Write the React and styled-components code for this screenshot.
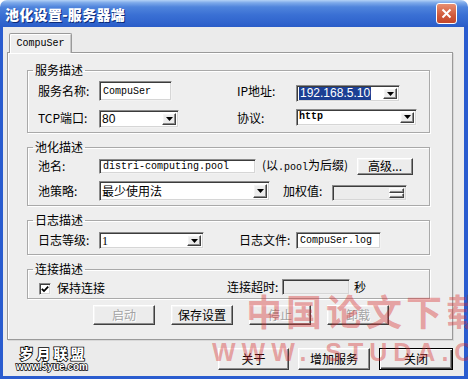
import React from 'react';
import styled, { createGlobalStyle, css } from 'styled-components';

const GlobalStyle = createGlobalStyle`
  html, body {
    margin: 0;
    padding: 0;
    background: #ffffff;
  }
  body {
    font-family: "Noto Sans CJK SC", "Liberation Sans", sans-serif;
    font-size: 12px;
    color: #000;
  }
  * {
    box-sizing: border-box;
  }
`;

const sunken = css`
  border: 1px solid;
  border-color: #8a8a8a #f2f2f2 #f2f2f2 #8a8a8a;
  box-shadow: inset 1px 1px 0 #3c3c3c, inset -1px -1px 0 #d6d6d6;
`;

const raised = css`
  border: 1px solid;
  border-color: #ffffff #404040 #404040 #ffffff;
  box-shadow: inset -1px -1px 0 #8c8c8c, inset 1px 1px 0 #f4f4f4;
`;

const Window = styled.div`
  position: relative;
  width: 468px;
  height: 379px;
  display: flex;
  flex-direction: column;
  overflow: hidden;
`;

const TitleBar = styled.div`
  flex: none;
  height: 27px;
  display: flex;
  align-items: center;
  justify-content: space-between;
  padding: 0 11px 0 5px;
  border-radius: 7px 7px 0 0;
  background: linear-gradient(
    to bottom,
    #b4d2f6 0%,
    #7eaaea 10%,
    #4f84dc 26%,
    #3a70d4 55%,
    #3064cd 85%,
    #2a5cc8 100%
  );
`;

const Title = styled.span`
  color: #ffffff;
  font-size: 14px;
  font-weight: 900;
  letter-spacing: 0.3px;
  text-shadow: 1px 1px 0 #0c2b78;
`;

const CloseButton = styled.div`
  width: 21px;
  height: 21px;
  border: 1px solid #ffffff;
  border-radius: 3px;
  background: linear-gradient(to bottom, #e88f72, #d0593a 60%, #c4472b);
  display: flex;
  align-items: center;
  justify-content: center;
`;

const Frame = styled.div`
  flex: 1;
  display: flex;
  flex-direction: column;
  background: #ebebeb;
  border: solid #2a5ccf;
  border-width: 0 4px 3px 3px;
  padding: 6px 11px 0 4px;
`;

const TabStrip = styled.div`
  display: flex;
  height: 19px;
  padding-left: 2px;
`;

const Tab = styled.div`
  width: 63px;
  height: 20px;
  margin-bottom: -1px;
  position: relative;
  z-index: 1;
  display: flex;
  align-items: center;
  justify-content: center;
  background: #eeeeee;
  border: 1px solid #9a9a9a;
  border-bottom: none;
  border-radius: 2px 2px 0 0;
  box-shadow: inset 1px 1px 0 #ffffff, inset -1px 0 0 #c8c8c8;
  font-family: "Liberation Mono", monospace;
  font-size: 10px;
`;

const TabPage = styled.div`
  flex: none;
  height: 288px;
  display: flex;
  flex-direction: column;
  background: #eeeeee;
  border: 1px solid #9a9a9a;
  box-shadow: inset 1px 1px 0 #ffffff, 1px 1px 0 #d8d8d8;
  padding: 10px 22px 0 19px;
`;

const Group = styled.fieldset`
  margin: 0;
  padding: ${({ $pt }) => $pt ?? 4}px 0 ${({ $pb }) => $pb ?? 4}px 10px;
  border: 1px solid #a9a9a9;
  box-shadow: inset 1px 1px 0 #ffffff, 1px 1px 0 #ffffff;
  min-width: 0;

  & + & {
    margin-top: 7px;
  }
`;

const Legend = styled.legend`
  margin-left: -5px;
  padding: 0 2px;
  line-height: 14px;
  font-size: 12px;
`;

const Row = styled.div`
  display: flex;
  align-items: center;
  height: ${({ $h }) => $h ?? 20}px;

  & + & {
    margin-top: 7px;
  }
`;

const Label = styled.span`
  flex: none;
  width: ${({ $w }) => ($w ? `${$w}px` : 'auto')};
  margin-left: ${({ $ml }) => $ml ?? 0}px;
  white-space: nowrap;
  line-height: 14px;
`;

const Slot = styled.div`
  flex: none;
  width: ${({ $w }) => $w}px;
  display: flex;
  align-items: center;
`;

const TextBox = styled.div`
  ${sunken}
  flex: none;
  width: ${({ $w }) => $w}px;
  height: ${({ $h }) => $h}px;
  margin-top: ${({ $mt }) => $mt ?? 0}px;
  padding: 0 3px;
  display: flex;
  align-items: center;
  background: ${({ $disabled }) => ($disabled ? '#ececec' : '#ffffff')};
  font-family: "Liberation Mono", monospace;
  font-size: 10px;
  line-height: 11px;
  white-space: nowrap;
`;

const ComboBox = styled.div`
  ${sunken}
  flex: none;
  width: ${({ $w }) => $w}px;
  height: ${({ $h }) => $h}px;
  margin-top: ${({ $mt }) => $mt ?? 0}px;
  padding: 2px;
  display: flex;
  align-items: center;
  background: #ffffff;
`;

const fonts = {
  sans: '"Liberation Sans", sans-serif',
  mono: '"Liberation Mono", monospace',
  serif: '"Liberation Serif", serif',
  cjk: '"Noto Sans CJK SC", sans-serif',
};

const ComboValue = styled.span`
  flex: 1;
  display: flex;
  align-items: center;
  height: 100%;
  min-width: 0;
  white-space: nowrap;
  font-family: ${({ $font }) => fonts[$font]};
  font-size: ${({ $size }) => $size}px;
  font-weight: ${({ $bold }) => ($bold ? 700 : 400)};
  line-height: 12px;
`;

const Highlight = styled.span`
  background: #1c3f94;
  color: #ffffff;
  padding: 0 1px;
  line-height: 13px;
`;

const DropButton = styled.span`
  ${raised}
  flex: none;
  width: ${({ $w }) => $w ?? 14}px;
  height: 100%;
  display: flex;
  align-items: center;
  justify-content: center;
  background: #ececec;
`;

const Hint = styled.span`
  flex: none;
  margin-left: 6px;
  width: 95px;
  white-space: nowrap;
  line-height: 14px;
`;

const HintMono = styled.span`
  font-family: "Liberation Mono", monospace;
  font-size: 10px;
`;

const SmallButton = styled.div`
  ${raised}
  flex: none;
  width: ${({ $w }) => $w}px;
  height: ${({ $h }) => $h}px;
  display: flex;
  align-items: center;
  justify-content: center;
  background: #ececec;
  white-space: nowrap;
  line-height: 14px;
`;

const SpinBox = styled.div`
  ${sunken}
  flex: none;
  width: 75px;
  height: 16px;
  margin-top: 3px;
  padding: 2px;
  display: flex;
  justify-content: flex-end;
  background: #ececec;
`;

const SpinButtons = styled.div`
  width: 15px;
  display: flex;
  flex-direction: column;
`;

const SpinHalf = styled.span`
  ${raised}
  flex: 1;
  background: #ececec;
`;

const CheckBox = styled.span`
  ${sunken}
  flex: none;
  width: 12px;
  height: 12px;
  margin-left: 1px;
  margin-top: 3px;
  background: #ffffff;
  display: flex;
  align-items: center;
  justify-content: center;
`;

const CheckLabel = styled.span`
  margin-left: 6px;
  margin-top: 2px;
  white-space: nowrap;
  line-height: 14px;
`;

const Unit = styled.span`
  margin-left: 4px;
  line-height: 14px;
`;

const ActionRow = styled.div`
  display: flex;
  gap: 16px;
  margin-top: 6px;
  padding-left: 66px;
`;

const Button = styled.div`
  ${raised}
  flex: none;
  width: ${({ $w }) => $w}px;
  height: ${({ $h }) => $h}px;
  display: flex;
  align-items: center;
  justify-content: center;
  background: #ececec;
  white-space: nowrap;
  line-height: 14px;
  color: ${({ $disabled }) => ($disabled ? '#a3a3a3' : '#000000')};
  text-shadow: ${({ $disabled }) => ($disabled ? '1px 1px 0 #ffffff' : 'none')};
  ${({ $default }) =>
    $default &&
    css`
      border-color: #000000;
      box-shadow: inset 1px 1px 0 #ffffff, inset -1px -1px 0 #404040,
        inset -2px -2px 0 #8c8c8c;
    `}
`;

const Footer = styled.div`
  flex: 1;
  display: flex;
  align-items: center;
  justify-content: space-between;
  padding-left: 8px;
`;

const Logo = styled.div`
  display: flex;
  flex-direction: column;
  align-items: center;
  width: 74px;
  margin-top: 1px;
`;

const LogoTitle = styled.span`
  font-family: "Noto Sans CJK SC", sans-serif;
  font-size: 14px;
  font-weight: 900;
  line-height: 16px;
  letter-spacing: 3px;
  margin-right: -3px;
  white-space: nowrap;
  color: #ffffff;
  -webkit-text-stroke: 1.6px #000000;
  paint-order: stroke fill;
`;

const LogoUrl = styled.span`
  font-family: "Liberation Sans", sans-serif;
  font-size: 10px;
  font-weight: 700;
  line-height: 11px;
  white-space: nowrap;
  color: #ffffff;
  -webkit-text-stroke: 1.4px #000000;
  paint-order: stroke fill;
`;

const FooterButtons = styled.div`
  display: flex;
  gap: 9px;
  margin-top: 2px;
`;

const Watermark = styled.div`
  position: absolute;
  left: ${({ $x }) => $x}px;
  top: ${({ $y }) => $y}px;
  white-space: nowrap;
  pointer-events: none;
  color: rgba(214, 40, 40, 0.4);
  font-family: ${({ $latin }) =>
    $latin ? '"Liberation Sans", sans-serif' : '"Noto Sans CJK SC", sans-serif'};
  font-size: ${({ $size }) => $size}px;
  font-weight: 700;
  letter-spacing: ${({ $ls }) => $ls}px;
  line-height: 1;
`;

const Arrow = () => (
  <svg width="7" height="4" viewBox="0 0 7 4">
    <polygon points="0,0 7,0 3.5,4" fill="#000" />
  </svg>
);

const Combo = ({ w, h, mt, font = 'sans', size = 12, bold, children }) => (
  <ComboBox $w={w} $h={h} $mt={mt}>
    <ComboValue $font={font} $size={size} $bold={bold}>
      {children}
    </ComboValue>
    <DropButton>
      <Arrow />
    </DropButton>
  </ComboBox>
);

export default function App() {
  return (
    <>
      <GlobalStyle />
      <Window>
        <TitleBar>
          <Title>池化设置-服务器端</Title>
          <CloseButton>
            <svg width="11" height="11" viewBox="0 0 11 11">
              <path d="M1.5 1.5 L9.5 9.5 M9.5 1.5 L1.5 9.5" stroke="#fff" strokeWidth="2" />
            </svg>
          </CloseButton>
        </TitleBar>
        <Frame>
          <TabStrip>
            <Tab>CompuSer</Tab>
          </TabStrip>
          <TabPage>
            <Group>
              <Legend>服务描述</Legend>
              <Row>
                <Label $w={61}>服务名称:</Label>
                <Slot $w={138}>
                  <TextBox $w={73} $h={20}>CompuSer</TextBox>
                </Slot>
                <Label $w={59}>IP地址:</Label>
                <Combo w={104} h={17} mt={5}>
                  <Highlight>192.168.5.10</Highlight>
                </Combo>
              </Row>
              <Row>
                <Label $w={61}>TCP端口:</Label>
                <Slot $w={138}>
                  <Combo w={80} h={18} mt={2}>80</Combo>
                </Slot>
                <Label $w={59}>协议:</Label>
                <Combo w={121} h={17} mt={-2} font="mono" size={10} bold>
                  http
                </Combo>
              </Row>
            </Group>

            <Group $pt={4} $pb={4}>
              <Legend>池化描述</Legend>
              <Row $h={16}>
                <Label $w={61}>池名:</Label>
                <TextBox $w={157} $h={15}>distri-computing.pool</TextBox>
                <Hint>
                  (以<HintMono>.pool</HintMono>为后缀)
                </Hint>
                <SmallButton $w={56} $h={17}>高级...</SmallButton>
              </Row>
              <Row>
                <Label $w={61}>池策略:</Label>
                <Combo w={171} h={20} font="cjk" size={12}>
                  最少使用法
                </Combo>
                <Label $w={49} $ml={13}>加权值:</Label>
                <SpinBox>
                  <SpinButtons>
                    <SpinHalf />
                    <SpinHalf />
                  </SpinButtons>
                </SpinBox>
              </Row>
            </Group>

            <Group $pt={4} $pb={5}>
              <Legend>日志描述</Legend>
              <Row $h={18}>
                <Label $w={61}>日志等级:</Label>
                <Slot $w={140}>
                  <Combo w={105} h={17} mt={1} font="serif" size={12}>
                    1
                  </Combo>
                </Slot>
                <Label $w={57}>日志文件:</Label>
                <TextBox $w={85} $h={17}>CompuSer.log</TextBox>
              </Row>
            </Group>

            <Group $pt={2} $pb={2}>
              <Legend>连接描述</Legend>
              <Row $h={18}>
                <Slot $w={189}>
                  <CheckBox>
                    <svg width="8" height="8" viewBox="0 0 8 8">
                      <path d="M0.8 3.8 L3 6 L7.2 1.6" stroke="#000" strokeWidth="1.8" fill="none" />
                    </svg>
                  </CheckBox>
                  <CheckLabel>保持连接</CheckLabel>
                </Slot>
                <Label $w={55}>连接超时:</Label>
                <TextBox $w={68} $h={16} $disabled />
                <Unit>秒</Unit>
              </Row>
            </Group>

            <ActionRow>
              <Button $w={62} $h={20} $disabled>启动</Button>
              <Button $w={62} $h={20}>保存设置</Button>
              <Button $w={62} $h={20} $disabled>停止</Button>
              <Button $w={62} $h={20} $disabled>卸载</Button>
            </ActionRow>
          </TabPage>

          <Footer>
            <Logo>
              <LogoTitle>岁月联盟</LogoTitle>
              <LogoUrl>www.5yue.com</LogoUrl>
            </Logo>
            <FooterButtons>
              <Button $w={71} $h={22}>关于</Button>
              <Button $w={72} $h={22}>增加服务</Button>
              <Button $w={74} $h={22} $default>关闭</Button>
            </FooterButtons>
          </Footer>
        </Frame>

        <Watermark $x={246} $y={292} $size={36} $ls={4}>
          中国论文下载
        </Watermark>
        <Watermark $x={212} $y={340} $size={25} $ls={6} $latin>
          WWW. STUDA.CN
        </Watermark>
      </Window>
    </>
  );
}
